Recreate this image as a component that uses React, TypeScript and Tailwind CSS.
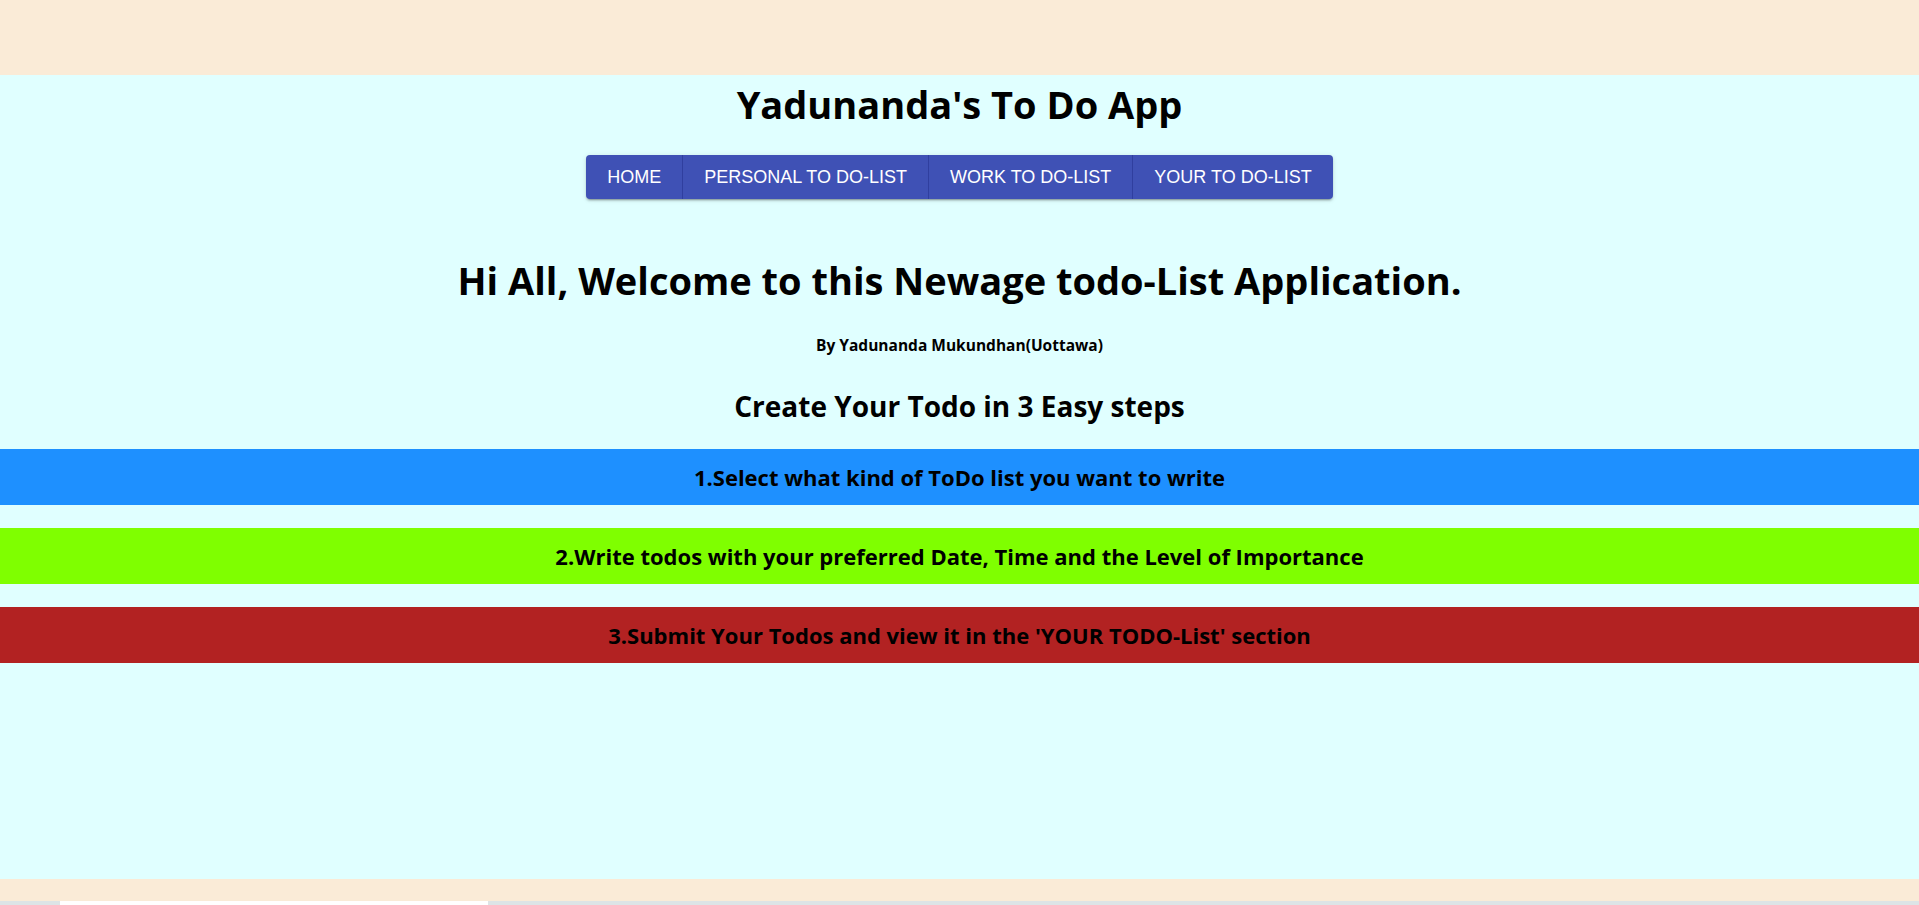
const navItems = ["HOME", "PERSONAL TO DO-LIST", "WORK TO DO-LIST", "YOUR TO DO-LIST"];

const steps = [
  { text: "1.Select what kind of ToDo list you want to write", color: "bg-[#1e90ff]" },
  { text: "2.Write todos with your preferred Date, Time and the Level of Importance", color: "bg-[#7fff00]" },
  { text: "3.Submit Your Todos and view it in the 'YOUR TODO-List' section", color: "bg-[#b22222]" },
];

export default function App() {
  return (
    <div className="flex h-[905px] flex-col overflow-hidden bg-[#faebd7] font-['Open_Sans',sans-serif] text-black">
      <div className="h-[75px] shrink-0" />

      <main className="flex h-[804px] shrink-0 flex-col items-center bg-[#e0ffff]">
        <h1 className="mt-[5px] text-[38px] leading-[48px] font-bold">Yadunanda's To Do App</h1>

        <nav className="mt-[27px] flex overflow-hidden rounded bg-[#3f51b5] shadow-[0_3px_1px_-2px_rgba(0,0,0,0.2),0_2px_2px_0_rgba(0,0,0,0.14),0_1px_5px_0_rgba(0,0,0,0.12)]">
          {navItems.map((item, i) => (
            <button
              key={item}
              className={
                "h-[44px] px-[21px] font-['Liberation_Sans',Arial,sans-serif] text-[18px] leading-6 text-white " +
                (i < navItems.length - 1 ? "border-r border-[#303f9f]" : "")
              }
            >
              {item}
            </button>
          ))}
        </nav>

        <h2 className="mt-[57px] text-[38px] leading-[48px] font-bold">
          Hi All, Welcome to this Newage todo-List Application.
        </h2>

        <h4 className="mt-[29px] text-[15.5px] leading-6 font-bold">By Yadunanda Mukundhan(Uottawa)</h4>

        <h3 className="mt-[31px] text-[28px] leading-9 font-bold">Create Your Todo in 3 Easy steps</h3>

        <div className="mt-[25px] flex w-full flex-col gap-[23px]">
          {steps.map((s) => (
            <div key={s.text} className={"flex h-14 items-center justify-center " + s.color}>
              <span className="text-[22px] font-bold">{s.text}</span>
            </div>
          ))}
        </div>
      </main>

      <div className="h-[22px] shrink-0" />
      <div className="flex h-[4px] shrink-0 bg-[#dde4e6]">
        <div className="ml-[60px] w-[428px] bg-white" />
      </div>
    </div>
  );
}
